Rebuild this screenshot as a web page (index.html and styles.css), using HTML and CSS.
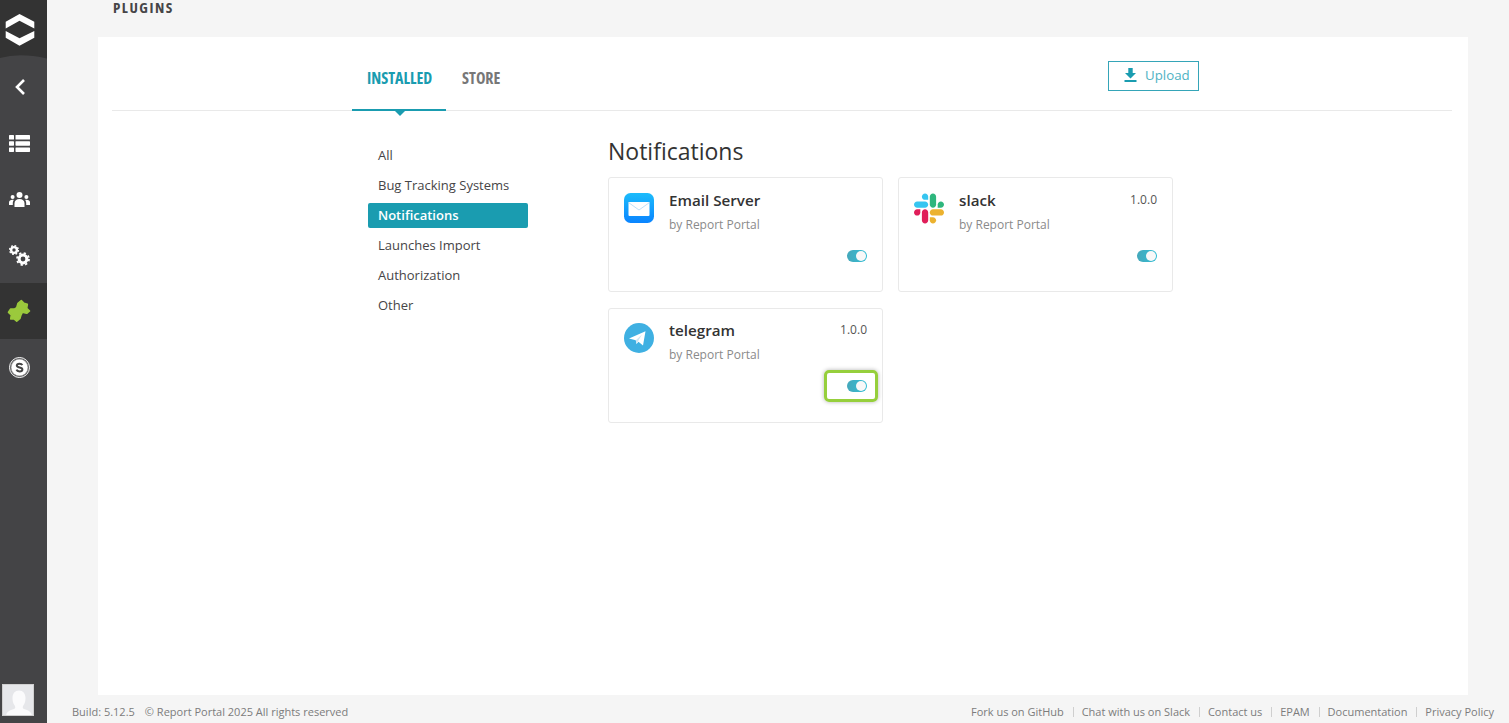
FILE: index.html
```html
<!DOCTYPE html>
<html lang="en">
<head>
    <meta charset="UTF-8">
    <meta name="viewport" content="width=device-width, initial-scale=1.0">
    <title>Plugins</title>
    <link rel="stylesheet" href="styles.css">
</head>
<body>

    <div class="app">
        <aside class="sidebar">
            <div class="sidebar-logo">
                <svg class="logo-bg" width="47" height="59" viewBox="0 0 47 59"><path d="M0 0H47V58.500Q20 52.500 0 58Z" fill="#333333"/></svg>
                <svg class="logo-mark" width="30" height="33" viewBox="0 0 30 33" fill="#fff">
                    <path d="M.7 8.700 14.500 1 29.300 8.700V15.500L14.500 7.700 .7 15.500Z"/>
                    <path d="M.7 18 14.500 25.300 29.300 18V24.700L14.500 32.700 .7 24.700Z"/>
                </svg>
            </div>
            <a class="side-item" href="#">
                <svg width="12" height="18" viewBox="0 0 12 18" fill="none" stroke="#fff" stroke-width="2.600"><path d="M10 2 3 9l7 7"/></svg>
            </a>
            <a class="side-item" href="#">
                <svg width="21" height="17" viewBox="0 0 21 17" fill="#fff">
                    <rect width="5" height="4.500" rx=".6"/><rect x="6.500" width="14.500" height="4.500" rx=".6"/>
                    <rect y="6.200" width="5" height="4.500" rx=".6"/><rect x="6.500" y="6.200" width="14.500" height="4.500" rx=".6"/>
                    <rect y="12.400" width="5" height="4.500" rx=".6"/><rect x="6.500" y="12.400" width="14.500" height="4.500" rx=".6"/>
                </svg>
            </a>
            <a class="side-item" href="#">
                <svg width="21" height="15" viewBox="0 0 21 15" fill="#fff">
                    <circle cx="10.500" cy="3" r="3"/><circle cx="3.600" cy="5" r="2"/><circle cx="17.400" cy="5" r="2"/>
                    <path d="M5.500 15v-3.500C5.500 8.500 7.500 7 10.500 7s5 1.500 5 4.500V15Z"/>
                    <path d="M0 13v-2.500C0 8.500 1.500 7.700 3.500 7.700c.6 0 1 .1 1.300.2C4 9 3.800 10 3.800 11.500V13Z"/>
                    <path d="M21 13v-2.500c0-2-1.500-2.800-3.500-2.800-.6 0-1 .1-1.300.2.800 1.100 1 2.100 1 3.600V13Z"/>
                </svg>
            </a>
            <a class="side-item" href="#">
                <svg width="21" height="21" viewBox="0 0 21 21" fill="none" stroke="#fff">
                    <circle cx="5" cy="5" r="2.900" stroke-width="2.400"/>
                    <circle cx="5" cy="5" r="4.400" stroke-width="1.400" stroke-dasharray="1.700 1.750"/>
                    <circle cx="14" cy="14" r="3.900" stroke-width="3"/>
                    <circle cx="14" cy="14" r="6" stroke-width="1.800" stroke-dasharray="2.300 2.410"/>
                </svg>
            </a>
            <a class="side-item side-item-active" href="#">
                <svg width="32" height="32" viewBox="0 0 32 32" fill="#9bc93c" stroke="#9bc93c" stroke-width="1.600" stroke-linejoin="round">
                    <path d="M17.300 5.500 20 8.300 23.300 9.300 22.700 13.300 25.500 16 22.700 18.300 18.300 17.300 16.700 20.700 16 23.300 12.700 26.200 10 24 6.700 24 7.300 20 4.500 17.300 6.700 14 10.700 14 12.700 12.700 14 8.300Z"/>
                </svg>
            </a>
            <a class="side-item" href="#">
                <svg width="21" height="21" viewBox="0 0 21 21">
                    <circle cx="10.500" cy="10.500" r="10" fill="none" stroke="#fff" stroke-width="1"/>
                    <circle cx="10.500" cy="10.500" r="9" fill="#9a9a9a"/>
                    <circle cx="10.500" cy="10.500" r="8" fill="#fff"/>
                    <path d="M13.300 8.200c-.4-1-1.500-1.500-2.800-1.500-1.500 0-2.700.7-2.700 1.900 0 2.700 5.600 1.200 5.600 3.900 0 1.200-1.300 1.900-2.900 1.900-1.400 0-2.600-.6-3-1.700" fill="none" stroke="#444" stroke-width="2"/>
                </svg>
            </a>
            <div class="sidebar-spacer"></div>
            <div class="avatar">
                <svg width="32" height="32" viewBox="0 0 32 32"><rect width="32" height="32" fill="#e6e7ea"/><path d="M3 32c0-5 3-6.500 8-8 1.500-.6 1.500-2 .7-3.500-1.500-2-2.200-4.500-2.200-7.500 0-4.500 2.500-7.500 6.500-7.500s6.500 3 6.500 7.500c0 3-.7 5.500-2.200 7.500-.8 1.500-.8 2.900.7 3.500 5 1.500 8 3 8 8Z" fill="#fbfbfc"/></svg>
            </div>
        </aside>

        <div class="main">
            <h1 class="page-title">PLUGINS</h1>

            <section class="panel">
                <div class="tabs-bar">
                    <div class="tabs">
                        <a class="tab tab-active" href="#"><span class="cond">INSTALLED</span></a>
                        <a class="tab" href="#"><span class="cond">STORE</span></a>
                    </div>
                    <button class="upload-btn" type="button">
                        <svg width="13" height="14" viewBox="0 0 13 14" fill="#1a9cb0"><path d="M4.300 0h4.400v5h3.300L6.500 10.500 1 5h3.300Z"/><rect x=".5" y="12" width="12" height="2"/></svg>
                        Upload
                    </button>
                </div>

                <div class="plugins">
                    <ul class="plugin-menu">
                        <li>All</li>
                        <li>Bug Tracking Systems</li>
                        <li class="menu-active">Notifications</li>
                        <li>Launches Import</li>
                        <li>Authorization</li>
                        <li>Other</li>
                    </ul>

                    <div class="plugin-list">
                        <h2>Notifications</h2>
                        <div class="cards">
                            <div class="card">
                                <div class="card-head">
                                    <svg class="card-icon" viewBox="0 0 30 31">
                                        <defs><linearGradient id="mailBg" x1="0" y1="0" x2="0" y2="1"><stop offset="0" stop-color="#1cbcfb"/><stop offset="1" stop-color="#0a84ff"/></linearGradient></defs>
                                        <rect width="30" height="30" rx="6.500" fill="url(#mailBg)"/>
                                        <rect x="4.500" y="9" width="21" height="14" rx="1" fill="#fff"/>
                                        <path d="M4.500 9.500 15 17l10.500-7.500" fill="none" stroke="#bfe0f8" stroke-width="1"/>
                                    </svg>
                                    <div class="card-info">
                                        <div class="card-name">Email Server</div>
                                        <div class="card-by">by Report Portal</div>
                                    </div>
                                </div>
                                <div class="card-foot"><span class="toggle"></span></div>
                            </div>

                            <div class="card">
                                <div class="card-head">
                                    <svg class="card-icon" viewBox="0 0 122.800 122.800">
                                        <path d="M25.800 77.600c0 7.100-5.800 12.900-12.900 12.900S0 84.700 0 77.600s5.800-12.900 12.900-12.900h12.900v12.900z" fill="#E01E5A"/>
                                        <path d="M32.300 77.600c0-7.100 5.800-12.900 12.900-12.900s12.900 5.800 12.900 12.900v32.300c0 7.100-5.800 12.900-12.900 12.900s-12.900-5.800-12.900-12.900V77.600z" fill="#E01E5A"/>
                                        <path d="M45.200 25.800c-7.100 0-12.900-5.800-12.900-12.900S38.100 0 45.200 0s12.900 5.800 12.900 12.900v12.900H45.200z" fill="#36C5F0"/>
                                        <path d="M45.200 32.300c7.100 0 12.900 5.800 12.900 12.900s-5.800 12.900-12.900 12.900H12.900C5.800 58.100 0 52.300 0 45.200s5.800-12.900 12.900-12.900h32.300z" fill="#36C5F0"/>
                                        <path d="M97 45.200c0-7.100 5.800-12.900 12.900-12.900s12.900 5.800 12.900 12.900-5.800 12.900-12.900 12.900H97V45.200z" fill="#2EB67D"/>
                                        <path d="M90.500 45.200c0 7.100-5.800 12.900-12.900 12.900s-12.900-5.800-12.900-12.900V12.900C64.700 5.800 70.500 0 77.600 0s12.900 5.800 12.900 12.900v32.300z" fill="#2EB67D"/>
                                        <path d="M77.600 97c7.100 0 12.900 5.800 12.900 12.900s-5.800 12.900-12.900 12.900-12.900-5.800-12.900-12.900V97h12.900z" fill="#ECB22E"/>
                                        <path d="M77.600 90.500c-7.100 0-12.900-5.800-12.900-12.900s5.800-12.900 12.900-12.900h32.300c7.100 0 12.900 5.800 12.900 12.900s-5.800 12.900-12.900 12.900H77.600z" fill="#ECB22E"/>
                                    </svg>
                                    <div class="card-info">
                                        <div class="card-name">slack</div>
                                        <div class="card-by">by Report Portal</div>
                                    </div>
                                    <div class="card-version">1.0.0</div>
                                </div>
                                <div class="card-foot"><span class="toggle"></span></div>
                            </div>

                            <div class="card card-short">
                                <div class="card-head">
                                    <svg class="card-icon" viewBox="0 0 30 31">
                                        <circle cx="15" cy="15" r="15" fill="#3fb0e2"/>
                                        <path d="M5 15.500 21.500 8.300 19 22.500 14.500 18.700 12.500 21 11.800 17.200Z" fill="#fff"/>
                                        <path d="M11.800 17.200 18 11.500 14 18.300 12.500 21Z" fill="#cfe6f3"/>
                                    </svg>
                                    <div class="card-info">
                                        <div class="card-name">telegram</div>
                                        <div class="card-by">by Report Portal</div>
                                    </div>
                                    <div class="card-version">1.0.0</div>
                                </div>
                                <div class="card-foot">
                                    <span class="toggle toggle-marked"></span>
                                </div>
                            </div>
                        </div>
                    </div>
                </div>
            </section>

            <footer class="footer">
                <div class="footer-left">
                    <span>Build: 5.12.5</span>
                    <span>© Report Portal 2025 All rights reserved</span>
                </div>
                <div class="footer-links">
                    <a href="#">Fork us on GitHub</a>
                    <a href="#">Chat with us on Slack</a>
                    <a href="#">Contact us</a>
                    <a href="#">EPAM</a>
                    <a href="#">Documentation</a>
                    <a href="#">Privacy Policy</a>
                </div>
            </footer>
        </div>
    </div>

</body>
</html>
```

FILE: styles.css
```css
* {
    box-sizing: border-box;
}

body {
    margin: 0;
    height: 723px;
    overflow: hidden;
    font-family: "Open Sans", Arial, sans-serif;
    background-color: #f5f5f5;
    color: #464547;
}

a {
    color: inherit;
    text-decoration: none;
}

.app {
    display: flex;
    height: 723px;
}

/* sidebar */
.sidebar {
    width: 47px;
    flex-shrink: 0;
    display: flex;
    flex-direction: column;
    background-color: #444446;
}

.sidebar-logo {
    position: relative;
    height: 59px;
}

.logo-bg {
    display: block;
}

.logo-mark {
    position: absolute;
    top: 13px;
    left: 5px;
}

.side-item {
    height: 56px;
    padding-right: 8px;
    display: flex;
    justify-content: center;
    align-items: center;
}

.side-item-active {
    background-color: #333333;
}

.sidebar-spacer {
    flex: 1;
}

.avatar {
    width: 32px;
    height: 32px;
    margin: 0 0 7px 2px;
    border: 1px solid #d0d0d0;
    overflow: hidden;
}

.avatar svg {
    display: block;
}

/* main column */
.main {
    flex: 1;
    min-width: 0;
    display: flex;
    flex-direction: column;
}

.page-title {
    height: 37px;
    margin: 0;
    padding: 0 0 0 66px;
    font-size: 15px;
    line-height: 14px;
    font-weight: 700;
    letter-spacing: 1.500px;
    color: #464547;
    font-stretch: condensed;
}

.panel {
    height: 658px;
    margin: 0 41px 0 51px;
    padding: 0 16px 0 14px;
    background-color: #fff;
}

.tabs-bar {
    height: 74px;
    display: flex;
    justify-content: space-between;
    padding: 0 253px 0 240px;
    border-bottom: 1px solid #e9e9e9;
}

.tabs {
    display: flex;
}

.tab {
    position: relative;
    height: 74px;
    padding: 31px 0 0 15px;
    width: 94px;
    font-size: 16px;
    line-height: 20px;
    font-weight: 700;
    color: #777777;
}

.tab + .tab {
    padding-left: 16px;
    width: 70px;
}

.cond {
    display: inline-block;
    font-stretch: condensed;
}

.tab-active {
    color: #1a9cb0;
    border-bottom: 2px solid #1a9cb0;
}

.tab-active::after {
    content: "";
    position: absolute;
    left: 43px;
    bottom: -7px;
    border-left: 5px solid transparent;
    border-right: 5px solid transparent;
    border-top: 5px solid #1a9cb0;
}

.upload-btn {
    width: 91px;
    height: 30px;
    margin-top: 24px;
    display: flex;
    align-items: center;
    gap: 8px;
    padding: 0 0 2px 15px;
    background-color: #fff;
    border: 1px solid #35a5b8;
    font-family: inherit;
    font-size: 13.300px;
    color: #4fb3c4;
}

.plugins {
    display: flex;
    padding-left: 256px;
}

.plugin-menu {
    width: 160px;
    margin: 32px 80px 0 0;
    padding: 0;
    list-style: none;
    font-size: 13px;
    color: #464547;
}

.plugin-menu li {
    height: 25px;
    margin-bottom: 5px;
    padding-left: 10px;
    line-height: 25px;
}

.plugin-menu .menu-active {
    background-color: #1a9cb0;
    border-radius: 2px;
    color: #fff;
    font-weight: 600;
}

.plugin-list h2 {
    height: 66px;
    margin: 0;
    padding-top: 24px;
    font-size: 23px;
    line-height: 32px;
    font-weight: 500;
    color: #333333;
}

.cards {
    display: grid;
    grid-template-columns: 275px 275px;
    gap: 16px 15px;
}

.card {
    height: 115px;
    padding: 15px;
    border: 1px solid #e9e9e9;
    border-radius: 3px;
    background-color: #fff;
}

.card-short {
    padding-top: 14px;
}

.card-head {
    display: flex;
    height: 57px;
}

.card-icon {
    width: 30px;
    height: 31px;
    flex-shrink: 0;
    margin-right: 15px;
}

.card-info {
    flex: 1;
}

.card-name {
    margin-top: -1px;
    font-size: 15.200px;
    line-height: 16px;
    font-weight: 550;
    color: #333333;
}

.card-by {
    margin-top: 8px;
    font-size: 12px;
    line-height: 17px;
    color: #8a8a8a;
}

.card-version {
    font-size: 12px;
    line-height: 14px;
    color: #555555;
}

.card-foot {
    display: flex;
    justify-content: flex-end;
}

.toggle {
    position: relative;
    display: block;
    width: 20px;
    height: 12px;
    border-radius: 6px;
    background: linear-gradient(to right, #45a8bb, #33bfd6);
}

.toggle::after {
    content: "";
    position: absolute;
    top: 1px;
    right: 1px;
    width: 10px;
    height: 10px;
    border-radius: 50%;
    background-color: #f8f8f8;
}

/* highlight frame drawn over the screenshot */
.toggle-marked::before {
    content: "";
    box-sizing: border-box;
    position: absolute;
    top: -10px;
    left: -23px;
    width: 54px;
    height: 32px;
    border: 3px solid #96cf3c;
    border-radius: 5px;
    box-shadow: 0 0 4px rgba(0, 0, 0, 0.3);
}

/* footer */
.footer {
    flex: 1;
    display: flex;
    justify-content: space-between;
    align-items: flex-end;
    padding: 0 15px 4px 25px;
    font-size: 11px;
    line-height: 15px;
    color: #7c7c7c;
}

.footer-left {
    display: flex;
    gap: 10px;
}

.footer-links a + a {
    margin-left: 6px;
}

.footer-links a + a::before {
    content: "";
    display: inline-block;
    width: 1px;
    height: 10px;
    margin-right: 8px;
    vertical-align: -1px;
    background-color: #cfcfcf;
}
```
